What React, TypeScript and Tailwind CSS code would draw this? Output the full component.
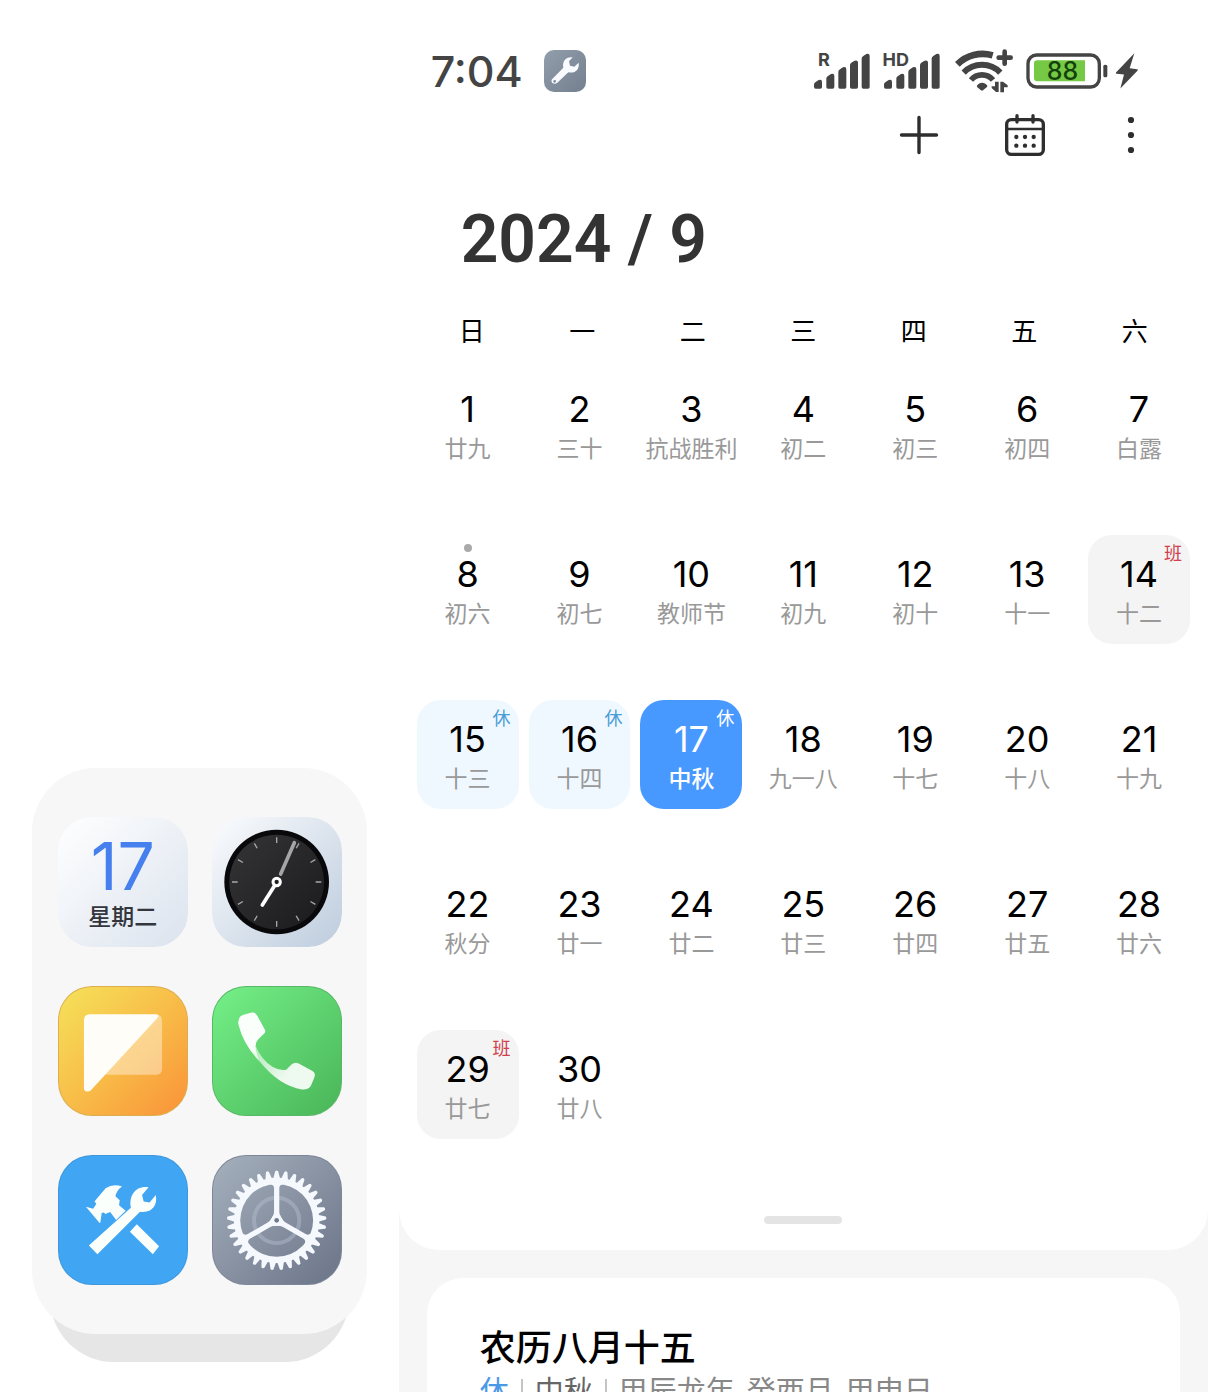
import React from "react";

type Mark = "work" | "rest" | "today";
type Day = { n: number; lunar: string; mark?: Mark; dot?: boolean };

const weekdays = ["日", "一", "二", "三", "四", "五", "六"];

const lunarNames = [
  "廿九", "三十", "抗战胜利", "初二", "初三", "初四", "白露",
  "初六", "初七", "教师节", "初九", "初十", "十一", "十二",
  "十三", "十四", "中秋", "九一八", "十七", "十八", "十九",
  "秋分", "廿一", "廿二", "廿三", "廿四", "廿五", "廿六",
  "廿七", "廿八",
];

const marks: Record<number, Mark> = { 14: "work", 15: "rest", 16: "rest", 17: "today", 29: "work" };

const days: Day[] = lunarNames.map((lunar, i) => ({
  n: i + 1,
  lunar,
  mark: marks[i + 1],
  dot: i + 1 === 8,
}));

const cellStyle: Record<Mark, string> = {
  work: "bg-[#f4f4f4]",
  rest: "bg-[#f0f8ff]",
  today: "bg-[#4798ff]",
};

const badgeStyle: Record<Mark, string> = {
  work: "text-[#d0404c]",
  rest: "text-[#4a9cd6]",
  today: "text-white",
};

function DayCell({ day }: { day: Day }) {
  const { n, lunar, mark, dot } = day;
  const today = mark === "today";
  return (
    <button
      type="button"
      aria-current={today ? "date" : undefined}
      className={`relative flex h-[109px] flex-col items-center rounded-3xl pt-[18px] ${mark ? cellStyle[mark] : ""}`}
    >
      {dot && <span className="absolute top-[9px] size-2 rounded-full bg-[#aaaaaa]" />}
      {mark && (
        <span className={`absolute top-2 right-2 text-[18px] leading-5 ${badgeStyle[mark]}`}>
          {mark === "work" ? "班" : "休"}
        </span>
      )}
      <span className={`font-['Inter'] text-[36px] leading-[42px] ${today ? "text-white" : "text-black"}`}>{n}</span>
      <span
        className={`text-[23px] leading-[36px] whitespace-nowrap ${today ? "font-medium text-white" : "text-[#999999]"}`}
      >
        {lunar}
      </span>
    </button>
  );
}

function Signal({ label, labelClass }: { label: string; labelClass: string }) {
  const bars = [
    [0, 80],
    [37, 62],
    [73, 42],
    [108, 22],
    [143, 2],
  ];
  return (
    <div className="relative">
      <span className={`absolute -top-[3px] font-['Inter'] text-[18px] leading-5 font-bold ${labelClass}`}>{label}</span>
      <svg width="56" height="36" viewBox="0 0 168 108" fill="#444">
        {bars.map(([x, y]) => (
          <path key={x} d={`M${x} ${y + 14} Q${x} ${y + 9} ${x + 6} ${y + 6} L${x + 14} ${y + 1} Q${x + 24} ${y - 2} ${x + 24} ${y + 7} V102 Q${x + 24} 107 ${x + 19} 107 H${x + 5} Q${x} 107 ${x} 102 Z`} />
        ))}
      </svg>
    </div>
  );
}

function Wifi() {
  return (
    <svg width="58" height="44" viewBox="465 57 174 132" fill="none" stroke="#444">
      <path d="M472 103A107 107 0 0 1 578 76" strokeWidth="20" />
      <path d="M491 128A76 76 0 0 1 601 128" strokeWidth="18" />
      <path d="M513 150A43 43 0 0 1 579 150" strokeWidth="17" />
      <path d="M532 165Q546 152 561 165Q564 169 560 172L549 181Q546 183 543 181L532 172Q529 169 532 165Z" fill="#444" stroke="none" />
      <path d="M614 65V101M596 83H632" strokeWidth="14" strokeLinecap="round" />
      <path d="M596 155V186H588L575 174V169H585V155ZM601 187V155H609L623 166V172H612V187Z" fill="#444" stroke="none" />
    </svg>
  );
}

function Battery() {
  return (
    <div className="relative">
      <svg width="82" height="36" viewBox="678 68 246 108">
        <rect x="684" y="74" width="214" height="96" rx="26" fill="none" stroke="#444" strokeWidth="10" />
        <path d="M712 90H855V153H712Q702 153 702 143V100Q702 90 712 90Z" fill="#76c944" />
        <rect x="910" y="103" width="12" height="38" rx="5" fill="#444" />
      </svg>
      <span className="absolute inset-y-0 left-0 w-[73px] text-center font-['Inter'] text-[25px] leading-9 font-medium text-[#12420a]">
        88
      </span>
    </div>
  );
}

function StatusBar() {
  return (
    <header className="flex h-[44px] items-center pr-[70px] pl-8 text-[#444]">
      <time className="font-['Inter'] text-[43px] leading-[44px] font-medium">7:04</time>
      <span className="ml-[21px] flex size-[42px] items-center justify-center rounded-[10px] bg-linear-to-br from-[#929eac] to-[#747f8f]">
        <svg width="42" height="42" viewBox="432 60 126 126">
          <path
            d="M456 148L490 113C486 94 498 79 518 82L507 94L510 107L523 110L536 98C539 118 526 131 505 127L472 158C463 166 450 158 456 148Z"
            fill="#f8faff"
          />
          <circle cx="464" cy="154" r="4" fill="#8290a0" />
        </svg>
      </span>
      <div className="ml-auto flex items-center">
        <Signal label="R" labelClass="left-1" />
        <div className="ml-[14px]">
          <Signal label="HD" labelClass="right-[31px]" />
        </div>
        <div className="ml-[15px]">
          <Wifi />
        </div>
        <div className="ml-[13px]">
          <Battery />
        </div>
        <svg className="ml-2 shrink-0" width="22" height="36" viewBox="948 69 66 105" fill="#444">
          <path d="M1003 68L947 127Q946 130 950 130L972 132L961 174L1013 120Q1015 116 1011 116L989 113Z" />
        </svg>
      </div>
    </header>
  );
}

function Toolbar() {
  return (
    <nav className="mt-[21px] flex justify-end gap-[64px] pr-[56px]">
      <button type="button" aria-label="新建" className="size-[42px]">
        <svg width="42" height="42" viewBox="0 0 42 42" stroke="#2e2e2e" strokeWidth="3.4" strokeLinecap="round">
          <path d="M21 3.500V38.500M3.500 21H38.500" />
        </svg>
      </button>
      <button type="button" aria-label="日历视图" className="size-[42px]">
        <svg width="42" height="42" viewBox="612 250 126 126" fill="none" stroke="#2e2e2e" strokeWidth="10">
          <rect x="620" y="267" width="110" height="104" rx="14" />
          <path d="M620 295H730" strokeWidth="8" />
          <path d="M651 255V274M699 255V274" strokeLinecap="round" />
          <g fill="#2e2e2e" stroke="none">
            {[649, 675, 701].map((x) => (
              <React.Fragment key={x}>
                <circle cx={x} cy="319" r="6.500" />
                <circle cx={x} cy="345" r="6.500" />
              </React.Fragment>
            ))}
          </g>
        </svg>
      </button>
      <button type="button" aria-label="更多" className="size-[42px]">
        <svg width="42" height="42" viewBox="0 0 42 42" fill="#2e2e2e">
          <circle cx="21" cy="6" r="3.100" />
          <circle cx="21" cy="21" r="3.100" />
          <circle cx="21" cy="36" r="3.100" />
        </svg>
      </button>
    </nav>
  );
}

function gearPath() {
  const teeth = 33;
  const pts: string[] = [];
  const at = (r: number, a: number) => `${(771 + r * Math.sin(a)).toFixed(1)} ${(241 - r * Math.cos(a)).toFixed(1)}`;
  for (let i = 0; i < teeth; i++) {
    const c = (i * 2 * Math.PI) / teeth;
    pts.push(at(130, c - 0.075), at(150, c - 0.03), at(152, c), at(150, c + 0.03), at(130, c + 0.075));
  }
  return `M${pts.join("L")}Z`;
}

function CalendarIcon() {
  return (
    <span className="flex size-full flex-col items-center bg-linear-to-br from-white to-[#dbe3ee] pt-[22px]">
      <span className="font-['Inter'] text-[66px] leading-[54px] text-[#4680ee]">17</span>
      <span className="mt-2 text-[23px] leading-[30px] font-medium text-[#33363c]">星期二</span>
    </span>
  );
}

function ClockIcon() {
  const angles = [0, 30, 60, 90, 120, 150, 180, 210, 240, 270, 300, 330];
  return (
    <svg className="size-full" viewBox="577 171 390 390">
      <defs>
        <linearGradient id="clockTile" x1="0" y1="0" x2="1" y2="1">
          <stop offset="0" stopColor="#fbfcfe" />
          <stop offset="1" stopColor="#bdccdd" />
        </linearGradient>
        <linearGradient id="clockFace" x1="0" y1="0" x2="1" y2="1">
          <stop offset="0" stopColor="#343436" />
          <stop offset="1" stopColor="#1b1b1d" />
        </linearGradient>
      </defs>
      <rect x="577" y="171" width="390" height="390" fill="url(#clockTile)" />
      <circle cx="771" cy="366" r="157" fill="#09090b" />
      <circle cx="771" cy="366" r="142" fill="url(#clockFace)" />
      {angles.map((a) => (
        <path key={a} d="M771 232V249" stroke="#a8a8a8" strokeWidth="4" transform={`rotate(${a} 771 366)`} />
      ))}
      <path d="M783 342L824 248" stroke="#a5a5a5" strokeWidth="11" strokeLinecap="round" />
      <path d="M766 375L728 435" stroke="#fff" strokeWidth="11" strokeLinecap="round" />
      <circle cx="771" cy="366" r="11" fill="#222" stroke="#fff" strokeWidth="9" />
    </svg>
  );
}

function MessageIcon() {
  return (
    <svg className="size-full" viewBox="115 48 390 390">
      <defs>
        <linearGradient id="msgTile" x1="0" y1="0" x2="1" y2="1">
          <stop offset="0" stopColor="#f5e25a" />
          <stop offset="0.5" stopColor="#f8bd48" />
          <stop offset="1" stopColor="#fa9238" />
        </linearGradient>
      </defs>
      <rect x="115" y="48" width="390" height="390" fill="url(#msgTile)" />
      <path d="M410 131Q429 133 429 150V296Q429 315 410 315H255Z" fill="#fff" fillOpacity="0.4" />
      <path d="M210 131H410Q424 132 414 143L213 362Q203 370 194 364Q191 362 191 356V150Q191 131 210 131Z" fill="#fffdf7" />
    </svg>
  );
}

function PhoneIcon() {
  return (
    <svg className="size-full" viewBox="577 48 390 390">
      <defs>
        <linearGradient id="phoneTile" x1="0" y1="0" x2="1" y2="1">
          <stop offset="0" stopColor="#75f088" />
          <stop offset="1" stopColor="#49b558" />
        </linearGradient>
        <linearGradient id="phoneNeck" x1="705" y1="230" x2="800" y2="320" gradientUnits="userSpaceOnUse">
          <stop offset="0" stopColor="#fff" stopOpacity="0.5" />
          <stop offset="1" stopColor="#fff" stopOpacity="0.9" />
        </linearGradient>
        <linearGradient id="phoneHead" x1="680" y1="200" x2="730" y2="290" gradientUnits="userSpaceOnUse">
          <stop offset="0.4" stopColor="#fbfffb" />
          <stop offset="1" stopColor="#fbfffb" stopOpacity="0.6" />
        </linearGradient>
      </defs>
      <rect x="577" y="48" width="390" height="390" fill="url(#phoneTile)" />
      <path d="M707 228Q724 270 758 291Q780 304 800 300L817 283Q826 275 838 281L880 304Q891 311 886 323L876 347Q868 362 848 360Q780 350 720 276Q708 244 707 228Z" fill="url(#phoneNeck)" />
      <path d="M668 133L695 126Q705 124 711 134L734 176Q739 184 733 190L715 207Q706 215 707 230Q708 244 720 276Q670 225 655 164Q650 140 668 133Z" fill="url(#phoneHead)" />
    </svg>
  );
}

function ToolsIcon() {
  return (
    <svg className="size-full" viewBox="115 45 390 390" fill="#fafffb">
      <rect x="115" y="45" width="390" height="390" fill="#40a5f2" />
      <path d="M206 318L334 203C327 163 350 134 388 140L368 164L373 184L391 187L410 164C416 196 398 220 362 215L232 344Z" />
      <path d="M223 184L257 143Q280 128 307 138Q290 150 287 168L300 180L298 195L318 212L289 240L271 216L256 222Z" />
      <path d="M197 200L219 206L232 186L256 216L245 219L241 248L238 248Z" />
      <path d="M352 253L420 320L401 344L331 276Z" />
    </svg>
  );
}

function SettingsIcon() {
  return (
    <svg className="size-full" viewBox="577 45 390 390">
      <defs>
        <linearGradient id="setTile" x1="0" y1="0" x2="1" y2="1">
          <stop offset="0" stopColor="#a5b0bd" />
          <stop offset="1" stopColor="#6b7488" />
        </linearGradient>
        <mask id="gearHole">
          <rect x="577" y="45" width="390" height="390" fill="#fff" />
          <circle cx="771" cy="241" r="111" fill="#000" />
        </mask>
      </defs>
      <rect x="577" y="45" width="390" height="390" fill="url(#setTile)" />
      <circle cx="771" cy="241" r="69" fill="none" stroke="#b4bfd0" strokeOpacity="0.45" strokeWidth="12" />
      <path d={gearPath()} fill="#f5f8fd" mask="url(#gearHole)" />
      {[0, 120, 240].map((a) => (
        <path
          key={a}
          d="M751 241Q763 226 763 214V142Q763 132 748 130V122H794V130Q779 132 779 142V214Q779 226 791 241Z"
          fill="#f5f8fd"
          transform={`rotate(${a} 771 241)`}
        />
      ))}
      <circle cx="771" cy="241" r="14" fill="#f5f8fd" />
      <circle cx="771" cy="241" r="7" fill="#6f7b8d" />
    </svg>
  );
}

const apps = [
  { name: "日历", Icon: CalendarIcon, edge: "" },
  { name: "时钟", Icon: ClockIcon, edge: "" },
  { name: "短信", Icon: MessageIcon, edge: "bg-[#dcae50] p-px" },
  { name: "电话", Icon: PhoneIcon, edge: "bg-[#57b966] p-px" },
  { name: "工具", Icon: ToolsIcon, edge: "bg-[#3f98dc] p-px" },
  { name: "设置", Icon: SettingsIcon, edge: "bg-[#7d8798] p-px" },
];

function Dock() {
  return (
    <aside className="flex flex-col justify-end px-8 pb-[30px]">
      <div className="relative mb-7">
        <div className="absolute inset-x-[18px] top-1/2 -bottom-7 rounded-b-[64px] bg-[#e6e6e6]" />
        <div className="relative grid grid-cols-[130px_130px] justify-center gap-x-6 gap-y-[39px] rounded-[64px] bg-[#f7f7f7] py-[49px] pl-px">
          {apps.map(({ name, Icon, edge }) => (
            <button key={name} type="button" aria-label={name} className={`size-[130px] overflow-hidden rounded-[34px] ${edge}`}>
              <span className="block size-full overflow-hidden rounded-[33px]">
                <Icon />
              </span>
            </button>
          ))}
        </div>
      </div>
    </aside>
  );
}

export default function App() {
  return (
    <div className="grid h-screen grid-cols-[33%_1fr] overflow-hidden bg-white font-['Noto_Sans','Noto_Sans_CJK_SC',sans-serif]">
      <Dock />
      <main className="flex flex-col overflow-hidden bg-[#f6f6f6]">
        <section className="shrink-0 rounded-b-[40px] bg-white pt-[49px] pb-[26px]">
          <StatusBar />
          <Toolbar />
          <h1 className="mt-[44px] pl-[62px] font-['Roboto'] text-[66px] leading-[80px] font-semibold text-[#333]">
            2024 / 9
          </h1>
          <div className="mt-[33px] grid grid-cols-7 px-[18px] text-center text-[26px] leading-[36px] text-black">
            {weekdays.map((w) => (
              <span key={w}>{w}</span>
            ))}
          </div>
          <div className="mt-[21px] grid grid-cols-7 gap-x-[10px] gap-y-[56px] px-[18px]">
            {days.map((d) => (
              <DayCell key={d.n} day={d} />
            ))}
          </div>
          <div className="mx-auto mt-[77px] h-2 w-[78px] rounded-full bg-[#e4e4e4]" />
        </section>
        <section className="mx-7 mt-7 shrink-0 rounded-[36px] bg-white px-[53px] pt-[45px] pb-10">
          <h2 className="text-[36px] leading-[50px] font-medium text-black">农历八月十五</h2>
          <p className="flex items-center gap-3 text-[29px] leading-[36px] whitespace-nowrap text-[#888]">
            <span className="text-[#4a98e8]">休</span>
            <span className="h-6 w-0.5 bg-[#c4c4c4]" />
            <span className="text-[#666]">中秋</span>
            <span className="h-6 w-0.5 bg-[#c4c4c4]" />
            <span>甲辰龙年</span>
            <span>癸酉月</span>
            <span>甲申日</span>
          </p>
        </section>
      </main>
    </div>
  );
}
